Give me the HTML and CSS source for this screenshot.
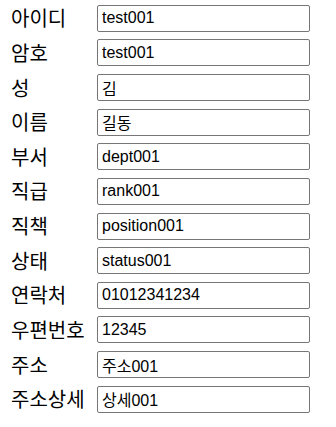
FILE: index.html
```html
<!DOCTYPE html>
<html lang="ko">
<head>
    <meta charset="UTF-8">
    <meta name="viewport" content="width=device-width, initial-scale=1.0">
    <title>사원 정보</title>
    <link rel="stylesheet" href="styles.css">
</head>
<body>
    <form class="member-form">
        <label for="userId">아이디</label>
        <input type="text" id="userId" value="test001">

        <label for="userPw">암호</label>
        <input type="text" id="userPw" value="test001">

        <label for="lastName">성</label>
        <input type="text" id="lastName" value="김">

        <label for="firstName">이름</label>
        <input type="text" id="firstName" value="길동">

        <label for="dept">부서</label>
        <input type="text" id="dept" value="dept001">

        <label for="rank">직급</label>
        <input type="text" id="rank" value="rank001">

        <label for="position">직책</label>
        <input type="text" id="position" value="position001">

        <label for="status">상태</label>
        <input type="text" id="status" value="status001">

        <label for="phone">연락처</label>
        <input type="text" id="phone" value="01012341234">

        <label for="zip">우편번호</label>
        <input type="text" id="zip" value="12345">

        <label for="addr">주소</label>
        <input type="text" id="addr" value="주소001">

        <label for="addrDetail">주소상세</label>
        <input type="text" id="addrDetail" value="상세001">
    </form>
</body>
</html>
```

FILE: styles.css
```css
body {
    margin: 0;
    background: #fff;
    color: #000;
}

.member-form {
    display: grid;
    grid-template-columns: 86px 213px;
    grid-auto-rows: 34.64px;
    align-items: center;
    padding: 1px 0 0 11px;
}

.member-form label {
    font-family: "Noto Sans CJK KR", sans-serif;
    font-size: 20px;
    line-height: 1;
    white-space: nowrap;
}

.member-form input {
    box-sizing: border-box;
    width: 213px;
    height: 27px;
    margin: 0;
    padding: 0 4px;
    border: 1px solid #767676;
    border-radius: 2px;
    font-family: "Liberation Sans", "Noto Sans CJK KR", sans-serif;
    font-size: 16px;
    color: #000;
    background: #fff;
}
```
